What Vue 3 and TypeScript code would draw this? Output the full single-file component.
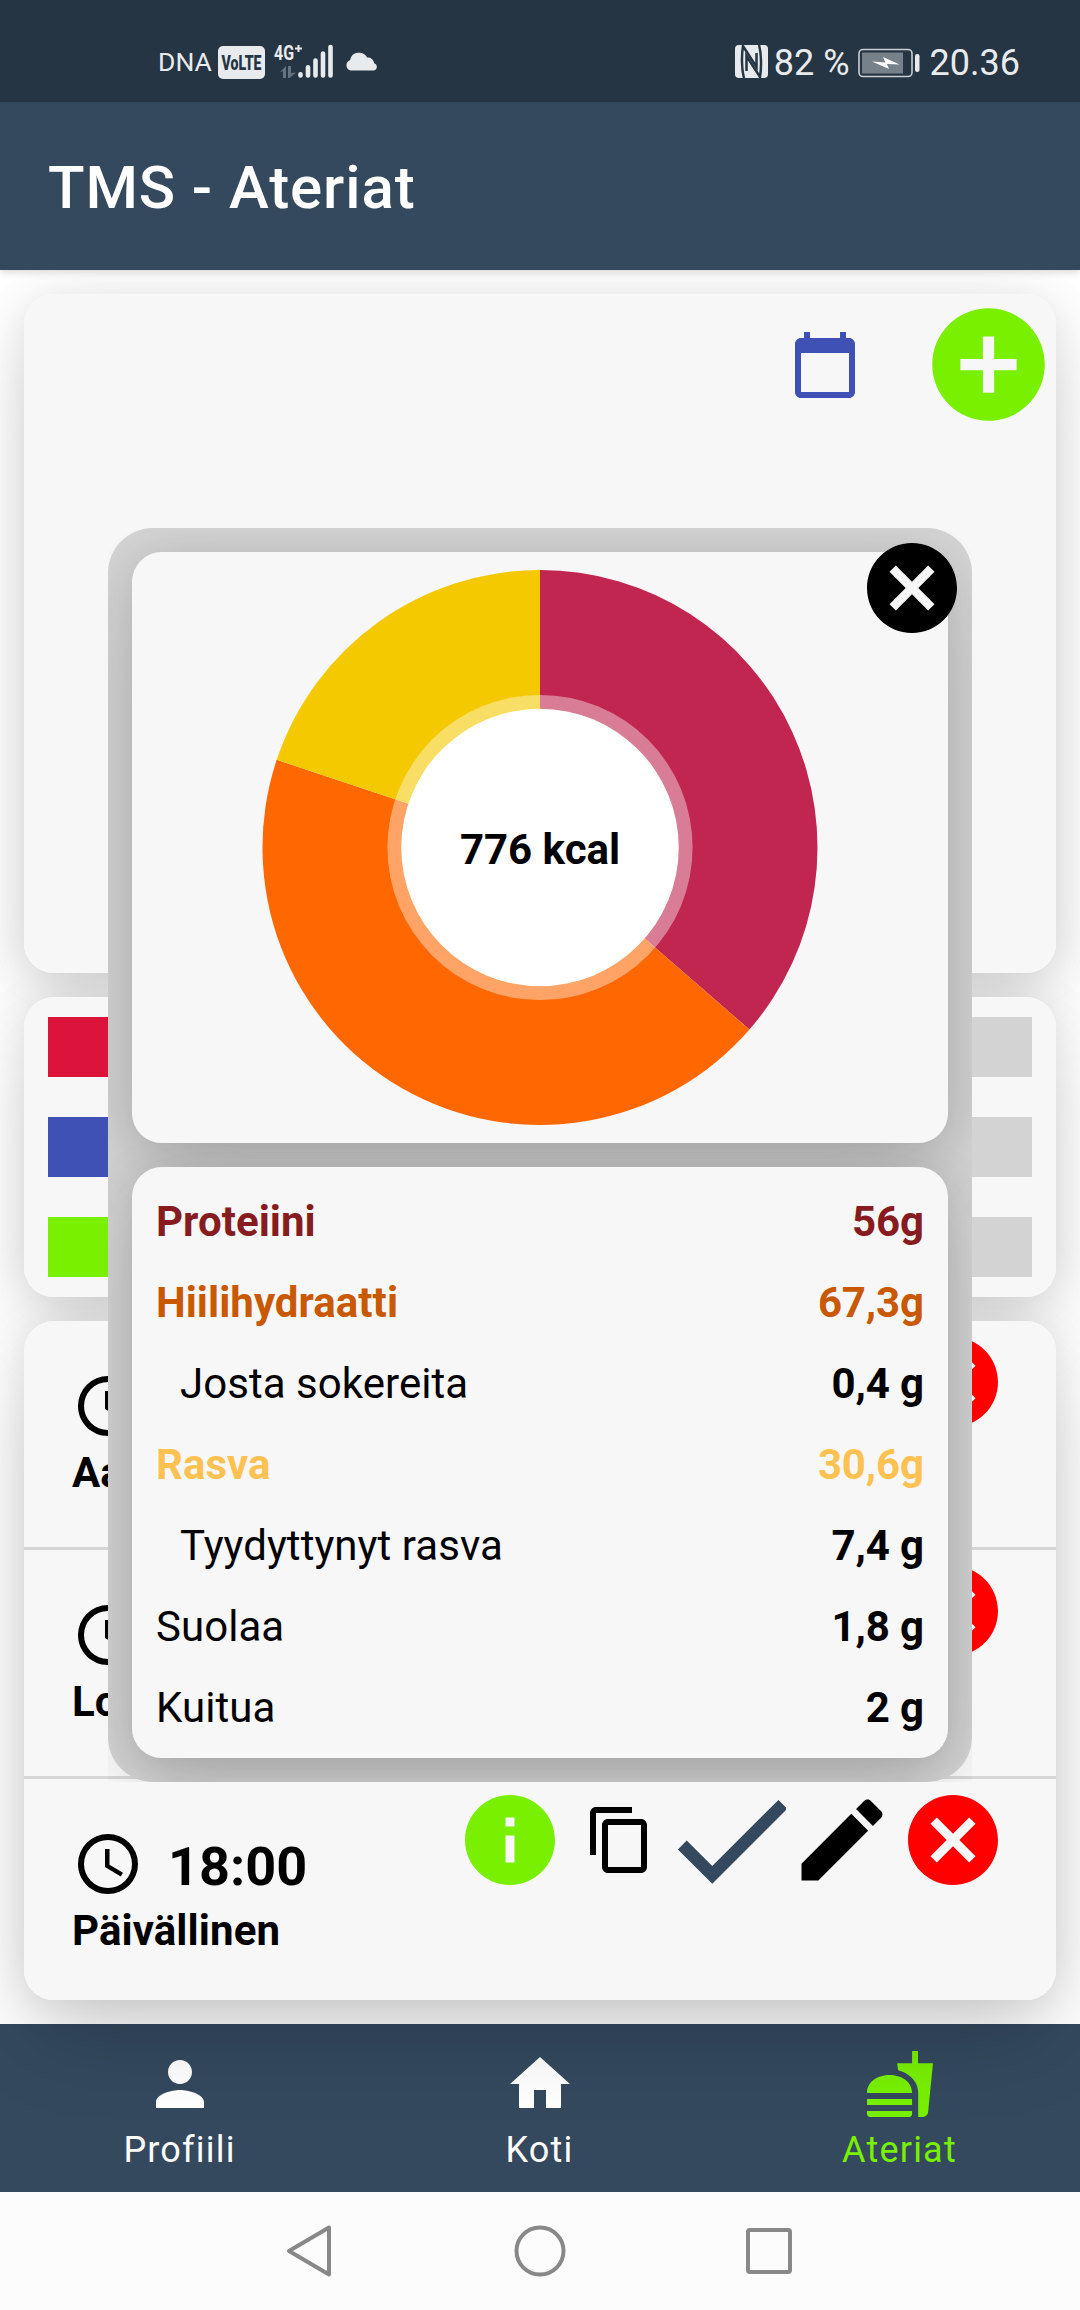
<script setup lang="ts">
interface Nutrient {
  label: string
  value: string
  tone?: 'protein' | 'carb' | 'fat'
  sub?: boolean
}

interface Slice {
  grams: number
  color: string
}

interface Meal {
  name: string
  time?: string
}

const nutrients: Nutrient[] = [
  { label: 'Proteiini', value: '56g', tone: 'protein' },
  { label: 'Hiilihydraatti', value: '67,3g', tone: 'carb' },
  { label: 'Josta sokereita', value: '0,4 g', sub: true },
  { label: 'Rasva', value: '30,6g', tone: 'fat' },
  { label: 'Tyydyttynyt rasva', value: '7,4 g', sub: true },
  { label: 'Suolaa', value: '1,8 g' },
  { label: 'Kuitua', value: '2 g' },
]

const slices: Slice[] = [
  { grams: 56, color: '#c02650' },
  { grams: 67.3, color: '#ff6700' },
  { grams: 30.6, color: '#f5c900' },
]

const RADIUS = 277.5
const total = slices.reduce((sum, s) => sum + s.grams, 0)

const point = (fraction: number): string => {
  const a = fraction * 2 * Math.PI
  return `${(RADIUS * Math.sin(a)).toFixed(3)} ${(-RADIUS * Math.cos(a)).toFixed(3)}`
}

let start = 0
const wedges = slices.map((s) => {
  const end = start + s.grams / total
  const large = end - start > 0.5 ? 1 : 0
  const d = `M0 0L${point(start)}A${RADIUS} ${RADIUS} 0 ${large} 1 ${point(end)}Z`
  start = end
  return { d, color: s.color }
})

const bars = ['#dc143c', '#3f51b5', '#78f000']

const meals: Meal[] = [
  { name: 'Aamiainen' },
  { name: 'Lounas' },
  { name: 'Päivällinen', time: '18:00' },
]

const tabs = [
  { label: 'Profiili', icon: 'M12 12c2.21 0 4-1.79 4-4s-1.79-4-4-4-4 1.79-4 4 1.79 4 4 4zm0 2c-2.67 0-8 1.34-8 4v2h16v-2c0-2.66-5.33-4-8-4z', active: false },
  { label: 'Koti', icon: 'M10 20v-6h4v6h5v-8h3L12 3 2 12h3v8z', active: false },
  { label: 'Ateriat', icon: 'M18.06 22.99h1.66c.84 0 1.53-.64 1.63-1.46L23 5.05h-5V1h-1.97v4.05h-4.97l.3 2.34c1.71.47 3.31 1.32 4.27 2.26 1.44 1.42 2.43 2.89 2.43 5.29v8.05zM1 21.99V21h15.03v.99c0 .55-.45 1-1.01 1H2.01c-.56 0-1.01-.45-1.01-1zm15.03-7c0-8-15.03-8-15.03 0h15.03zM1.02 17h15v2h-15v-2z', active: true },
]

const cancelPath = 'M12 2C6.47 2 2 6.47 2 12s4.47 10 10 10 10-4.47 10-10S17.53 2 12 2zm5 13.59L15.59 17 12 13.41 8.41 17 7 15.59 10.59 12 7 8.41 8.41 7 12 10.59 15.59 7 17 8.41 13.41 12 17 15.59z'
</script>

<template>
  <div class="screen">
    <div class="status">
      <div class="status-left">
        <span class="carrier">DNA</span>
        <svg class="volte" width="47" height="33" viewBox="0 0 47 33">
          <rect width="47" height="33" rx="5" fill="#e8ebed" />
          <text x="3.5" y="24" textLength="40" lengthAdjust="spacingAndGlyphs" font-size="21" font-weight="900" fill="#263544">VoLTE</text>
        </svg>
        <svg class="signal" width="60" height="35" viewBox="0 0 60 35">
          <text x="0" y="16" textLength="20" lengthAdjust="spacingAndGlyphs" font-size="20" font-weight="700" fill="#e8ebed">4G</text>
          <path d="M21 4.5h7M24.5 1v7" stroke="#e8ebed" stroke-width="2" />
          <path d="M5.5 28.5L12 22v12H9v-7zM14 22h3v7l5-.5L15.5 34H14z" fill="#66727d" />
          <path d="M26.5 30.2v1.3M34 23.3v8.2M41.5 16.5v15M49 9.5v22M56.5 3v28.5" stroke="#e8ebed" stroke-width="4.6" stroke-linecap="round" />
        </svg>
        <svg class="cloud" width="34" height="19" viewBox="0 0 34 19">
          <path d="M5.5 18.5a5.4 5.4 0 0 1-.5-10.3A9.2 9.2 0 0 1 22.2 5.6a6.3 6.3 0 0 1 7 5.7 3.7 3.7 0 0 1-.4 7.2z" fill="#e8ebed" />
        </svg>
      </div>
      <div class="status-right">
        <svg class="nfc" width="33" height="33" viewBox="0 0 33 33">
          <rect width="33" height="33" rx="4" fill="#e8ebed" />
          <g fill="none" stroke="#263544" stroke-width="2.5">
            <path d="M9 33C6.5 24 6.5 10 8 1L21.5 22V8" />
            <path d="M24 0C26.5 9 26.5 23 25 32L11.5 11V26" />
          </g>
        </svg>
        <span class="pct">82 %</span>
        <svg class="battery" width="62" height="30" viewBox="0 0 62 30">
          <rect x="1" y="1.5" width="53" height="27" rx="4" fill="none" stroke="#c9ced2" stroke-width="1.6" />
          <rect x="4" y="4.5" width="41" height="21" fill="#76818a" />
          <path d="M14 13.5L27.5 14.5 25 9l16.5 7.5L29 16l2 5z" fill="#fff" />
          <rect x="57" y="6" width="4.5" height="18" rx="2.2" fill="#e8ebed" />
        </svg>
        <span class="time">20.36</span>
      </div>
    </div>

    <header class="appbar"><h1>TMS - Ateriat</h1></header>

    <main class="body">
      <section class="card summary">
        <svg class="calendar" width="72" height="72" viewBox="0 0 24 24">
          <path fill="#3f51b5" d="M20 3h-1V1h-2v2H7V1H5v2H4c-1.1 0-2 .9-2 2v16c0 1.1.9 2 2 2h16c1.1 0 2-.9 2-2V5c0-1.1-.9-2-2-2zm0 18H4V8h16v13z" />
        </svg>
        <svg width="135" height="135" viewBox="0 0 24 24">
          <path fill="#78f000" d="M12 2C6.48 2 2 6.48 2 12s4.48 10 10 10 10-4.48 10-10S17.52 2 12 2zm5 11h-4v4h-2v-4H7v-2h4V7h2v4h4v2z" />
        </svg>
      </section>

      <section class="card bars">
        <div v-for="c in bars" :key="c" class="track">
          <div class="fill" :style="{ background: c }"></div>
        </div>
      </section>

      <section class="card meals">
        <article v-for="m in meals" :key="m.name" class="meal">
          <div class="meal-info">
            <div class="meal-time">
              <svg width="72" height="72" viewBox="0 0 24 24">
                <path d="M12,20A8,8 0 0,0 20,12A8,8 0 0,0 12,4A8,8 0 0,0 4,12A8,8 0 0,0 12,20M12,2A10,10 0 0,1 22,12A10,10 0 0,1 12,22C6.47,22 2,17.5 2,12A10,10 0 0,1 12,2M12.5,7V12.25L17,14.92L16.25,16.15L11,13V7H12.5Z" />
              </svg>
              <span v-if="m.time">{{ m.time }}</span>
            </div>
            <div class="meal-name">{{ m.name }}</div>
          </div>
          <div class="actions">
            <svg class="info" width="108" height="108" viewBox="0 0 24 24">
              <path fill="#78f000" d="M12 2C6.48 2 2 6.48 2 12s4.48 10 10 10 10-4.48 10-10S17.52 2 12 2zm1 15h-2v-6h2v6zm0-8h-2V7h2v2z" />
            </svg>
            <svg width="72" height="72" viewBox="0 0 24 24">
              <path d="M16 1H4c-1.1 0-2 .9-2 2v14h2V3h12V1zm3 4H8c-1.1 0-2 .9-2 2v14c0 1.1.9 2 2 2h11c1.1 0 2-.9 2-2V7c0-1.1-.9-2-2-2zm0 16H8V7h11v14z" />
            </svg>
            <svg width="130" height="150" viewBox="0 0 20.8 24">
              <path fill="#34495e" d="M21,7L9,19L3.5,13.5L4.91,12.09L9,16.17L19.59,5.59L21,7Z" />
            </svg>
            <svg class="pencil" width="108" height="108" viewBox="0 0 24 24">
              <path d="M20.71,7.04C21.1,6.65 21.1,6 20.71,5.63L18.37,3.29C18,2.9 17.35,2.9 16.96,3.29L15.12,5.12L18.87,8.87M3,17.25V21H6.75L17.81,9.93L14.06,6.18L3,17.25Z" />
            </svg>
            <svg width="108" height="108" viewBox="0 0 24 24">
              <path fill="#f00" :d="cancelPath" />
            </svg>
          </div>
        </article>
      </section>
    </main>

    <nav class="tabs">
      <a v-for="t in tabs" :key="t.label" class="tab" :class="{ active: t.active }">
        <svg width="72" height="72" viewBox="0 0 24 24"><path fill="currentColor" :d="t.icon" /></svg>
        <span>{{ t.label }}</span>
      </a>
    </nav>

    <div class="sysnav">
      <svg width="52" height="54" viewBox="0 0 52 54">
        <path d="M44 3.5v47L4 27z" fill="none" stroke="#888" stroke-width="4" stroke-linejoin="round" />
      </svg>
      <svg width="52" height="54" viewBox="0 0 52 54">
        <circle cx="26" cy="27" r="23.5" fill="none" stroke="#888" stroke-width="4" />
      </svg>
      <svg width="52" height="54" viewBox="0 0 52 54">
        <rect x="5" y="6" width="42" height="42" rx="2" fill="none" stroke="#888" stroke-width="4" />
      </svg>
    </div>

    <div class="dialog">
      <div class="panel">
        <section class="card chart">
          <svg width="556" height="555" viewBox="-278 -277.5 556 555">
            <path v-for="w in wedges" :key="w.color" :d="w.d" :fill="w.color" />
            <circle r="152.6" fill="#fff" fill-opacity=".4" />
            <circle r="138.75" fill="#fff" />
          </svg>
          <strong>776 kcal</strong>
        </section>
        <section class="card facts">
          <div v-for="n in nutrients" :key="n.label" class="fact" :class="[n.tone, { sub: n.sub }]">
            <span class="label">{{ n.label }}</span>
            <span class="value">{{ n.value }}</span>
          </div>
        </section>
      </div>
      <svg class="close" width="108" height="108" viewBox="0 0 24 24"><path :d="cancelPath" /></svg>
    </div>
  </div>
</template>

<style>
body {
  margin: 0;
  background: #fff;
}
</style>

<style scoped>
.screen {
  position: relative;
  isolation: isolate;
  width: 1080px;
  height: 2310px;
  display: flex;
  flex-direction: column;
  overflow: hidden;
  background: #fff;
  color: #000;
  font-family: Roboto, 'Liberation Sans', sans-serif;
}
svg {
  display: block;
  flex: none;
}
.status {
  position: relative;
  z-index: 3;
  height: 102px;
  flex: none;
  display: flex;
  justify-content: space-between;
  background: #263544;
  color: #e8ebed;
  padding: 0 60px 0 158px;
}
.status-left,
.status-right {
  display: flex;
  align-items: flex-start;
}
.carrier {
  width: 60px;
  margin-top: 46px;
  font-size: 26.5px;
  line-height: 32px;
}
.volte {
  margin-top: 46px;
  overflow: visible;
}
.signal {
  margin: 44px 0 0 9px;
  overflow: visible;
}
.cloud {
  margin: 52px 0 0 11px;
}
.nfc {
  margin: 45px 6px 0 0;
}
.pct,
.time {
  margin-top: 42px;
  font-size: 36px;
  line-height: 42px;
  white-space: nowrap;
}
.battery {
  margin: 48px 10px 0 8px;
}
.appbar {
  position: relative;
  z-index: 2;
  height: 168px;
  flex: none;
  display: flex;
  align-items: center;
  padding-left: 48px;
  background: #34495e;
  box-shadow: 0 2px 8px rgba(0, 0, 0, 0.16);
}
h1 {
  margin: 2px 0 0;
  color: #fff;
  font-size: 60px;
  font-weight: 500;
  letter-spacing: 0.9px;
}
.body {
  position: relative;
  z-index: 1;
  height: 1754px;
  flex: none;
  display: flex;
  flex-direction: column;
  gap: 24px;
  padding: 24px;
  box-sizing: border-box;
}
.card {
  position: relative;
  border-radius: 30px;
  background: #f7f7f7;
}
/* Shadows sit beneath every sibling card, so neighbours never darken each other. */
.card::before {
  content: '';
  position: absolute;
  inset: 0;
  z-index: -1;
  border-radius: 30px;
  box-shadow: 0 40px 90px -8px rgba(0, 0, 0, 0.14), 0 4px 44px rgba(0, 0, 0, 0.11);
}
.summary {
  height: 679px;
  display: flex;
  justify-content: flex-end;
  align-items: flex-start;
  gap: 60px;
  padding-top: 3px;
  box-sizing: border-box;
}
.calendar {
  margin-top: 32px;
}
.bars {
  height: 300px;
  box-sizing: border-box;
  padding: 20px 24px;
  display: flex;
  flex-direction: column;
  gap: 40px;
}
.track {
  height: 60px;
  background: #d3d3d3;
}
.fill {
  width: 50%;
  height: 60px;
}
.meals {
  height: 679px;
  display: flex;
  flex-direction: column;
}
.meals::before {
  box-shadow: 0 40px 90px -8px rgba(0, 0, 0, 0.18), 0 4px 44px rgba(0, 0, 0, 0.1);
}
.meal {
  height: 226px;
  display: flex;
  justify-content: space-between;
  border-bottom: 3px solid #d6d6d6;
  padding: 0 49px 0 48px;
}
.meal:last-child {
  border-bottom: 0;
  height: 221px;
}
.meal-info {
  padding-top: 49px;
}
.meal-time {
  display: flex;
  align-items: center;
  gap: 24px;
  height: 72px;
  font-size: 54px;
  font-weight: 700;
}
.meal-time span {
  margin-top: 4px;
}
.meal-name {
  font-size: 42px;
  font-weight: 700;
  line-height: 50px;
  margin-top: 6px;
  letter-spacing: 0.1px;
}
.actions {
  display: flex;
  align-items: center;
  height: 150px;
  margin-top: -14px;
}
.info {
  margin-right: 20px;
}
.pencil {
  margin: 0 3px 0 2px;
}
.tabs {
  height: 168px;
  flex: none;
  display: flex;
  background: #34495e;
}
.tab {
  flex: 1;
  display: flex;
  flex-direction: column;
  align-items: center;
  padding-top: 24px;
  color: #fff;
  font-size: 36px;
  line-height: 42px;
  letter-spacing: 1.2px;
}
.tab span {
  margin-top: 9px;
  margin-right: 1px;
}
.tab.active {
  color: #78f000;
}
.sysnav {
  height: 118px;
  flex: none;
  display: flex;
  justify-content: center;
  align-items: center;
  gap: 177px;
  background: #fcfcfc;
}
.dialog {
  position: absolute;
  z-index: 4;
  left: 108px;
  top: 528px;
  width: 864px;
  height: 1254px;
  overflow: hidden;
}
.panel {
  position: relative;
  z-index: 0;
  height: 1254px;
  box-sizing: border-box;
  padding: 24px;
  display: flex;
  flex-direction: column;
  gap: 24px;
  border-radius: 45px;
  background: #d3d3d3;
}
.chart {
  height: 591px;
  display: grid;
  place-items: center;
}
.chart > * {
  grid-area: 1 / 1;
}
.chart strong {
  font-size: 42px;
  z-index: 1;
  margin-top: 4px;
}
.facts {
  height: 591px;
  box-sizing: border-box;
  padding: 12px 24px;
}
.facts::before {
  box-shadow: 0 30px 70px -6px rgba(0, 0, 0, 0.17), 0 4px 44px rgba(0, 0, 0, 0.1);
}
.fact {
  height: 81px;
  display: flex;
  justify-content: space-between;
  font-size: 42px;
  line-height: 86px;
  letter-spacing: 0.05px;
}
.sub .label {
  padding-left: 24px;
}
.fact .value {
  letter-spacing: -0.1px;
}
.value,
.protein,
.carb,
.fat {
  font-weight: 700;
}
.protein {
  color: #861c20;
}
.carb {
  color: #c95900;
}
.fat {
  color: #ffc252;
}
.close {
  position: absolute;
  z-index: 1;
  right: 6px;
  top: 6px;
}
</style>
